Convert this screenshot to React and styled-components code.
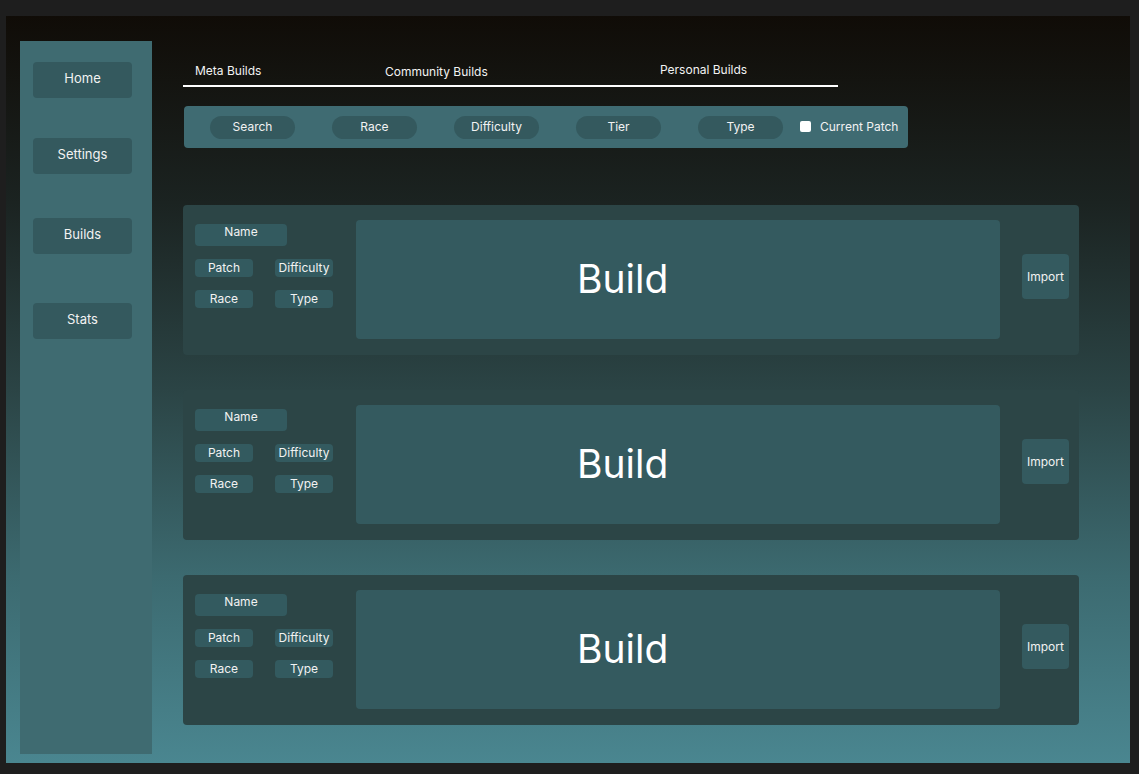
import styled, { createGlobalStyle } from "styled-components";

const GlobalStyle = createGlobalStyle`
  body {
    margin: 0;
    background: #1e1e1e;
    font-family: Inter, "Noto Sans", sans-serif;
    color: #f2f2f2;
  }
`;

const Frame = styled.div`
  margin: 16px 0 0 6px;
  width: 1124px;
  height: 747px;
  display: flex;
  box-sizing: border-box;
  padding: 25px 0 9px 14px;
  background: linear-gradient(
    180deg,
    #100c07 0%,
    #1b2321 25%,
    #2b4445 50%,
    #3c6a70 75%,
    #4a8690 100%
  );
`;

const Sidebar = styled.nav`
  width: 132px;
  background: #3f6b71;
  display: flex;
  flex-direction: column;
  align-items: flex-start;
  padding: 21px 0 0 13px;
  box-sizing: border-box;
`;

const NavButton = styled.div`
  width: 99px;
  height: 36px;
  margin-top: ${(p) => p.$gap || 0}px;
  padding-bottom: 4px;
  box-sizing: border-box;
  border-radius: 4px;
  background: #34595e;
  display: flex;
  align-items: center;
  justify-content: center;
  font-size: 13px;
`;

const Main = styled.main`
  margin-left: 31px;
  display: flex;
  flex-direction: column;
`;

const Tabs = styled.div`
  display: flex;
  width: 655px;
  height: 25px;
  border-bottom: 2px solid #ffffff;
  margin-top: 19px;
`;

const Tab = styled.div`
  width: ${(p) => p.$w}px;
  padding-left: ${(p) => p.$pl || 0}px;
  font-size: 12px;
  line-height: 15px;
  margin-top: ${(p) => p.$mt || 3}px;
  box-sizing: border-box;
`;

const FilterBar = styled.div`
  margin: 19px 0 0 1px;
  width: 724px;
  height: 42px;
  border-radius: 4px;
  background: #3f6b72;
  display: flex;
  align-items: center;
  padding-left: 26px;
  box-sizing: border-box;
  gap: 37px;
`;

const Pill = styled.div`
  width: 85px;
  height: 23px;
  padding-bottom: 2px;
  box-sizing: border-box;
  border-radius: 12px;
  background: #34595e;
  display: flex;
  align-items: center;
  justify-content: center;
  font-size: 12px;
`;

const Check = styled.label`
  display: flex;
  align-items: center;
  gap: 9px;
  font-size: 12px;
  margin-left: -20px;
  margin-top: -2px;
`;

const Box = styled.span`
  width: 11px;
  height: 11px;
  border-radius: 2px;
  background: #ffffff;
`;

const Cards = styled.div`
  margin-top: 57px;
  display: flex;
  flex-direction: column;
  gap: 35px;
`;

const Card = styled.div`
  width: 896px;
  height: 150px;
  border-radius: 4px;
  background: #2c4546;
  display: flex;
  align-items: flex-start;
  padding: 15px 10px 0 12px;
  box-sizing: border-box;
`;

const Meta = styled.div`
  width: 161px;
  padding-top: 4px;
  display: grid;
  grid-template-columns: 58px 58px;
  column-gap: 22px;
  row-gap: 13px;
`;

const NameTag = styled.div`
  grid-column: 1 / 3;
  width: 92px;
  height: 22px;
  border-radius: 4px;
  background: #335a5f;
  text-align: center;
  font-size: 12px;
  line-height: 16px;
`;

const Tag = styled.div`
  height: 17px;
  padding-bottom: 1px;
  border-radius: 4px;
  background: #335a5f;
  display: flex;
  align-items: center;
  justify-content: center;
  font-size: 12px;
`;

const BuildPanel = styled.div`
  width: 644px;
  height: 119px;
  border-radius: 4px;
  background: #345a5f;
  display: flex;
  align-items: center;
  padding: 0 0 2px 221px;
  box-sizing: border-box;
  font-size: 39px;
  color: #ffffff;
`;

const ImportButton = styled.div`
  margin: 34px 0 0 22px;
  width: 47px;
  height: 45px;
  border-radius: 4px;
  background: #345a5f;
  display: flex;
  align-items: center;
  justify-content: center;
  font-size: 12px;
`;

const navItems = [
  { label: "Home", gap: 0 },
  { label: "Settings", gap: 40 },
  { label: "Builds", gap: 44 },
  { label: "Stats", gap: 49 },
];

const filters = ["Search", "Race", "Difficulty", "Tier", "Type"];

function BuildCard() {
  return (
    <Card>
      <Meta>
        <NameTag>Name</NameTag>
        <Tag>Patch</Tag>
        <Tag>Difficulty</Tag>
        <Tag>Race</Tag>
        <Tag>Type</Tag>
      </Meta>
      <BuildPanel>Build</BuildPanel>
      <ImportButton>Import</ImportButton>
    </Card>
  );
}

function App() {
  return (
    <>
      <GlobalStyle />
      <Frame>
        <Sidebar>
          {navItems.map((n) => (
            <NavButton key={n.label} $gap={n.gap}>
              {n.label}
            </NavButton>
          ))}
        </Sidebar>
        <Main>
          <Tabs>
            <Tab $w={202} $pl={12}>Meta Builds</Tab>
            <Tab $w={275} $mt={4}>Community Builds</Tab>
            <Tab $w={178} $mt={2}>Personal Builds</Tab>
          </Tabs>
          <FilterBar>
            {filters.map((f) => (
              <Pill key={f}>{f}</Pill>
            ))}
            <Check>
              <Box />
              Current Patch
            </Check>
          </FilterBar>
          <Cards>
            <BuildCard />
            <BuildCard />
            <BuildCard />
          </Cards>
        </Main>
      </Frame>
    </>
  );
}

export default App;
